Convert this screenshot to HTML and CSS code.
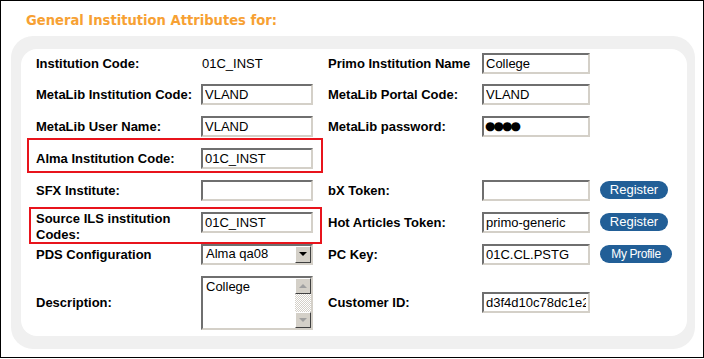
FILE: index.html
```html
<!DOCTYPE html>
<html>
<head>
  <title>General Institution Attributes</title>
  <link rel="stylesheet" href="styles.css">
</head>
<body>
  <div class="frame">
    <div class="title">General Institution Attributes for:</div>

    <div class="panel">
      <div class="inner">
        <table class="attrs">
          <colgroup>
            <col class="c-label1">
            <col class="c-field1">
            <col class="c-label2">
            <col class="c-field2">
            <col class="c-btn">
          </colgroup>
          <tr class="first">
            <td class="label">Institution Code:</td>
            <td class="value">01C_INST</td>
            <td class="label">Primo Institution Name</td>
            <td><input class="field short" type="text" value="College"></td>
            <td></td>
          </tr>
          <tr>
            <td class="label">MetaLib Institution Code:</td>
            <td><input class="field" type="text" value="VLAND"></td>
            <td class="label">MetaLib Portal Code:</td>
            <td><input class="field short" type="text" value="VLAND"></td>
            <td></td>
          </tr>
          <tr>
            <td class="label">MetaLib User Name:</td>
            <td><input class="field" type="text" value="VLAND"></td>
            <td class="label">MetaLib password:</td>
            <td><input class="field short pass" type="text" value="●●●●"></td>
            <td></td>
          </tr>
          <tr>
            <td class="label">Alma Institution Code:</td>
            <td><input class="field" type="text" value="01C_INST"></td>
            <td></td>
            <td></td>
            <td></td>
          </tr>
          <tr>
            <td class="label">SFX Institute:</td>
            <td><input class="field" type="text" value=""></td>
            <td class="label">bX Token:</td>
            <td><input class="field short" type="text" value=""></td>
            <td><span class="pill">Register</span></td>
          </tr>
          <tr>
            <td class="label"><div class="wrap-text">Source ILS institution Codes:</div></td>
            <td><input class="field" type="text" value="01C_INST"></td>
            <td class="label">Hot Articles Token:</td>
            <td><input class="field short" type="text" value="primo-generic"></td>
            <td><span class="pill">Register</span></td>
          </tr>
          <tr>
            <td class="label">PDS Configuration</td>
            <td>
              <div class="select">
                <span class="select-text">Alma qa08</span>
                <span class="select-btn"><span class="arrow-down"></span></span>
              </div>
            </td>
            <td class="label">PC Key:</td>
            <td><input class="field short" type="text" value="01C.CL.PSTG"></td>
            <td><span class="pill small">My Profile</span></td>
          </tr>
          <tr class="last">
            <td class="label">Description:</td>
            <td>
              <div class="textarea">
                <div class="textarea-text">College</div>
                <div class="scrollbar">
                  <span class="sb-btn"><span class="arrow-up"></span></span>
                  <span class="sb-track"></span>
                  <span class="sb-btn"><span class="arrow-down grey"></span></span>
                </div>
              </div>
            </td>
            <td class="label">Customer ID:</td>
            <td><input class="field short" type="text" value="d3f4d10c78dc1e2a9b0"></td>
            <td></td>
          </tr>
        </table>

        <!-- red highlight boxes drawn over the rows -->
        <div class="mark mark-alma"></div>
        <div class="mark mark-source"></div>
      </div>
    </div>
  </div>
</body>
</html>
```

FILE: styles.css
```css
body {
  margin: 0;
  padding: 0;
  background-color: #fff;
  font-family: "Liberation Sans", Arial, sans-serif;
}

.frame {
  width: 704px;
  height: 358px;
  box-sizing: border-box;
  border: 1px solid #000;
}

.title {
  height: 35px;
  padding-left: 25px;
  padding-top: 10px;
  box-sizing: border-box;
  color: #f7a133;
  font-family: "DejaVu Sans Condensed", "DejaVu Sans", sans-serif;
  font-size: 14.6px;
  font-weight: bold;
}

.panel {
  margin-left: 10px;
  width: 684px;
  height: 313px;
  box-sizing: border-box;
  padding: 13px 8px 13px 10px;
  background-color: #f0f0f0;
  border-radius: 22px;
}

.inner {
  position: relative;
  height: 287px;
  background-color: #fff;
  border-radius: 16px;
  padding-left: 15px;
}

.attrs {
  table-layout: fixed;
  width: 640px;
  border-collapse: collapse;
  font-size: 13px;
  color: #000;
}

.c-label1 { width: 165px; }
.c-field1 { width: 127px; }
.c-label2 { width: 154px; }
.c-field2 { width: 118px; }
.c-btn { width: 76px; }

.attrs td {
  padding: 0;
  height: 32px;
  vertical-align: middle;
  white-space: nowrap;
}

.attrs tr.first td {
  height: 29px;
}

.attrs tr.last td {
  height: 65px;
}

.label {
  font-weight: bold;
}

.wrap-text {
  white-space: normal;
  width: 150px;
  line-height: 16px;
  margin: 5px 0 -5px 0;
}

.value {
  padding-left: 1px !important;
}

.field {
  display: block;
  width: 112px;
  height: 21px;
  box-sizing: border-box;
  margin: 0;
  padding: 0 2px;
  border: 2px solid;
  border-color: #6f6f6f #d4d0c8 #d4d0c8 #6f6f6f;
  font-family: "Liberation Sans", Arial, sans-serif;
  font-size: 13px;
  color: #000;
  background: #fff;
  outline: none;
}

.field.short {
  width: 108px;
}

.field.pass {
  font-family: "DejaVu Sans", sans-serif;
  font-size: 12px;
  letter-spacing: -2px;
  padding-left: 1px;
}

.pill {
  display: inline-block;
  width: 68px;
  height: 18px;
  line-height: 18px;
  border-radius: 9px;
  background-color: #225f97;
  color: #fff;
  text-align: center;
  font-size: 13px;
}

.pill.small {
  width: 72px;
  font-size: 12px;
  letter-spacing: -0.4px;
}

.select {
  display: flex;
  width: 112px;
  height: 21px;
  box-sizing: border-box;
  border: 2px solid;
  border-color: #6f6f6f #d4d0c8 #d4d0c8 #6f6f6f;
  background: #fff;
}

.select-text {
  flex: 1;
  padding-left: 3px;
  line-height: 16px;
}

.select-btn {
  width: 16px;
  display: flex;
  align-items: center;
  justify-content: center;
  background: #d4d0c8;
  border: 1px solid;
  border-color: #fff #404040 #404040 #fff;
  box-sizing: border-box;
}

.arrow-down {
  width: 0;
  height: 0;
  border-left: 4px solid transparent;
  border-right: 4px solid transparent;
  border-top: 4px solid #000;
}

.arrow-down.grey {
  border-top-color: #a0a0a0;
}

.arrow-up {
  width: 0;
  height: 0;
  border-left: 4px solid transparent;
  border-right: 4px solid transparent;
  border-bottom: 4px solid #a0a0a0;
}

.textarea {
  display: flex;
  width: 112px;
  height: 54px;
  box-sizing: border-box;
  border: 2px solid;
  border-color: #6f6f6f #d4d0c8 #d4d0c8 #6f6f6f;
  background: #fff;
}

.textarea-text {
  flex: 1;
  padding: 1px 3px;
}

.scrollbar {
  width: 16px;
  display: flex;
  flex-direction: column;
}

.sb-btn {
  height: 16px;
  display: flex;
  align-items: center;
  justify-content: center;
  background: #d4d0c8;
  border: 1px solid;
  border-color: #fff #404040 #404040 #fff;
  box-sizing: border-box;
}

.sb-track {
  flex: 1;
  background: repeating-conic-gradient(#fff 0 25%, #d4d0c8 0 50%) 0 0 / 2px 2px;
}

.mark {
  position: absolute;
  border: 2px solid #e8141c;
  box-sizing: border-box;
}

.mark-alma {
  left: 6px;
  top: 89px;
  width: 296px;
  height: 35px;
}

.mark-source {
  left: 8px;
  top: 158px;
  width: 293px;
  height: 37px;
}
```
